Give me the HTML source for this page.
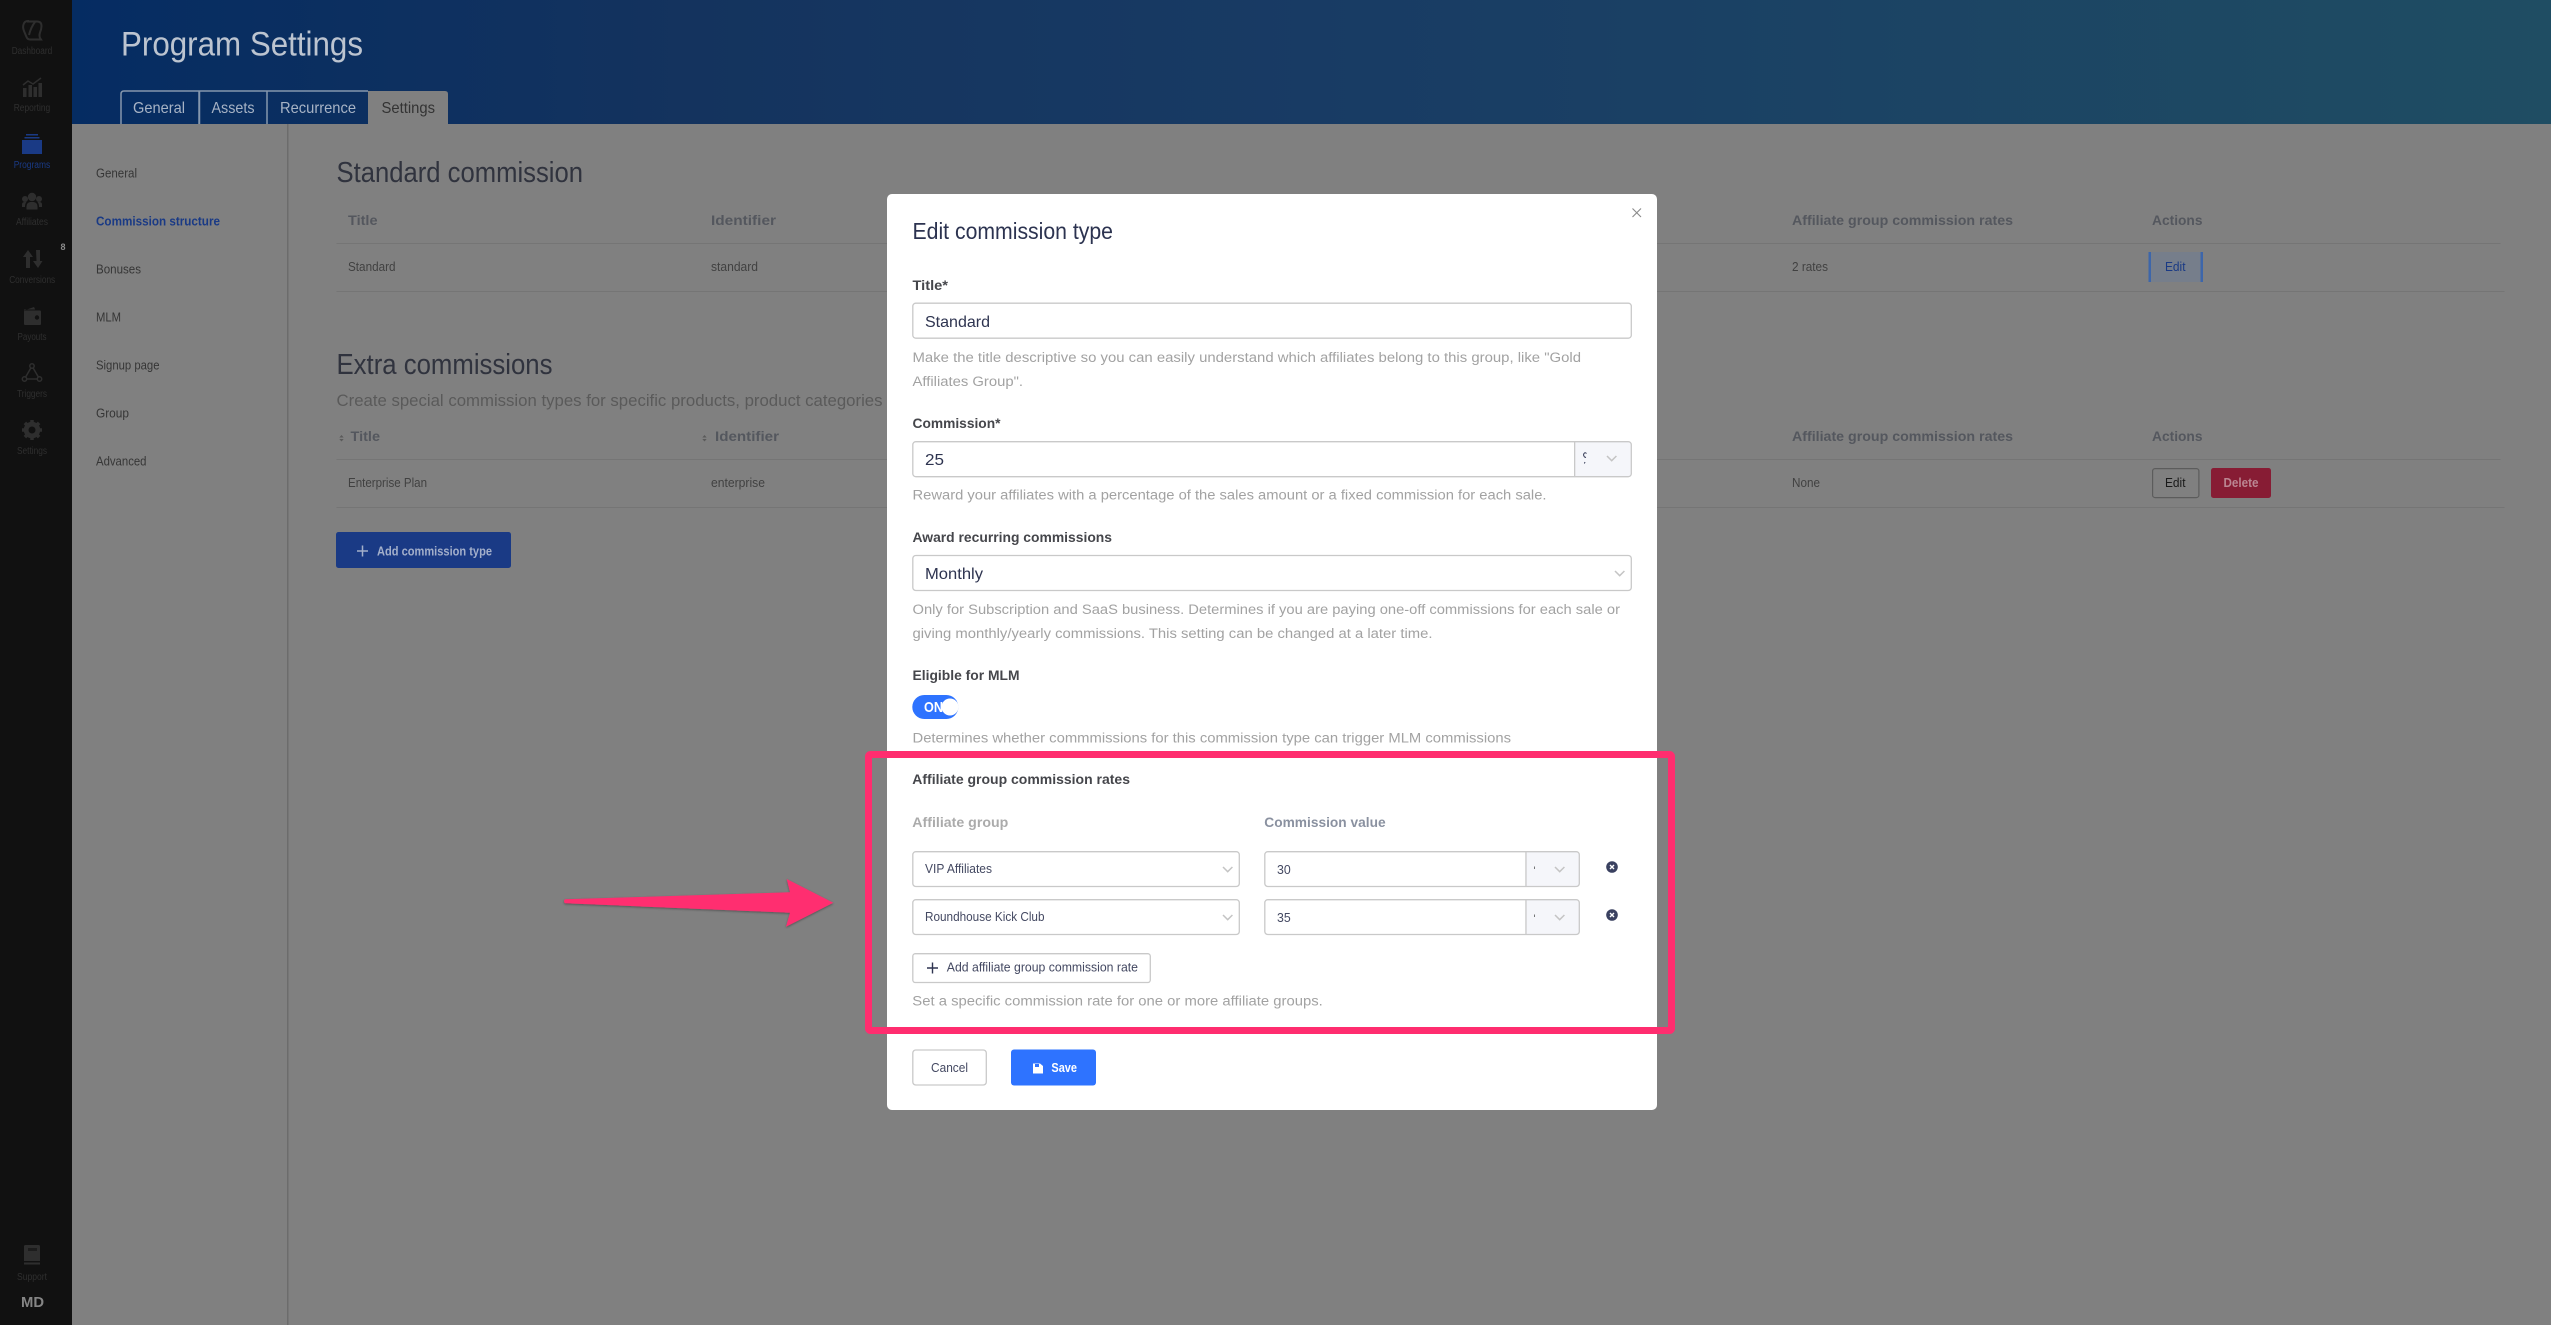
<!DOCTYPE html>
<html lang="en">
<head>
<meta charset="utf-8">
<title>Program Settings</title>
<style>
html,body{margin:0;padding:0;background:#808080;width:2551px;height:1325px;overflow:hidden}
svg{display:block}
text{font-family:"Liberation Sans",sans-serif;white-space:pre}
.nav{font-size:10px;fill:#2f2f2f}
.sub{font-size:13px;fill:#363636}
.h2{font-size:29px;fill:#30333e}
.th{font-size:14px;font-weight:700;fill:#54575e}
.td{font-size:12.5px;fill:#414141}
.tab{font-size:16px;fill:#a7b3c5}
.lbl{font-size:13.5px;font-weight:700;fill:#45464b}
.val{font-size:16px;fill:#2e3450}
.val2{font-size:12.5px;fill:#444962}
.help{font-size:13.5px;fill:#a2a2a2}
.chev{fill:none;stroke:#c4c4c4;stroke-width:1.5}
.box{fill:#fff;stroke:#c9c9c9;stroke-width:1.3}
.ico{fill:#2e2e2e}
</style>
</head>
<body>
<svg width="2551" height="1325" viewBox="0 0 2551 1325" xmlns="http://www.w3.org/2000/svg">
<defs>
<linearGradient id="hd" x1="72" y1="0" x2="2551" y2="0" gradientUnits="userSpaceOnUse">
<stop offset="0" stop-color="#052c62"/>
<stop offset=".25" stop-color="#14335e"/>
<stop offset=".5" stop-color="#183b64"/>
<stop offset="1" stop-color="#1f4d63"/>
</linearGradient>
<filter id="sh" x="-5%" y="-30%" width="110%" height="170%"><feDropShadow dx="0" dy="1" stdDeviation="1" flood-color="#000" flood-opacity=".35"/></filter>
</defs>

<!-- page -->
<rect width="2551" height="1325" fill="#808080"/>
<rect x="72" width="2479" height="124" fill="url(#hd)"/>

<!-- sidebar -->
<rect width="72" height="1325" fill="#111"/>
<path d="M28 21.500h9q4.500 0 4.500 4.500q0 3-1.500 6.500q-1 3 0 5.500l1 1.500H30q-2.500 0-3.500-2.500l-2.500-6q-1.500-4-.5-6.500q1-3.500 4.500-3.500zM35 22q-4 5-6 13" fill="none" stroke="#2e2e2e" stroke-width="2"/>
<text class="nav" x="11.700" y="54" textLength="40.500" lengthAdjust="spacingAndGlyphs">Dashboard</text>
<path class="ico" d="M23 88h3.500v9H23zM28.500 85h3.500v12h-3.500zM33.500 87H37v10h-3.500zM38.500 83H42v14h-3.500z"/>
<path d="M23 85l5-4 5 3 8-6" fill="none" stroke="#2e2e2e" stroke-width="1.500"/>
<text class="nav" x="13.700" y="111" textLength="36.500" lengthAdjust="spacingAndGlyphs">Reporting</text>
<path d="M26 134h12v1.500H26zM24.500 137h15v1.500h-15zM22 140h20v14H22z" fill="#1a3a85"/>
<text class="nav" x="13.700" y="168" textLength="36.500" lengthAdjust="spacingAndGlyphs" style="fill:#1a3a85">Programs</text>
<circle class="ico" cx="32" cy="197" r="4.200"/><circle class="ico" cx="25" cy="199" r="3"/><circle class="ico" cx="39" cy="199" r="3"/>
<path class="ico" d="M22 207v-2.500q0-2.500 3-2.500h1.500q-1.500 1.500-1.500 5zM42 207v-2.500q0-2.500-3-2.500h-1.500q1.500 1.500 1.500 5zM26.500 209.500v-3q0-4 4-4.500h3q4 .5 4 4.500v3z"/>
<text class="nav" x="16" y="225" textLength="32" lengthAdjust="spacingAndGlyphs">Affiliates</text>
<path class="ico" d="M28 250l5 7h-3v11h-4v-11h-3zM36 250h4v11h2.500l-4.500 7-5-7h3.500z"/>
<text class="nav" x="9.200" y="283" textLength="46" lengthAdjust="spacingAndGlyphs">Conversions</text>
<text x="60.500" y="250" style="font-size:9px;font-weight:700;fill:#8a8a8a">8</text>
<path class="ico" d="M24 310.500l10-3.500 1.200 2.500H24zM25 310.500h15q1 0 1 1v12.500q0 1-1 1H25q-1 0-1-1V311.500q0-1 1-1z"/><circle cx="37" cy="317.500" r="2.200" fill="#111"/>
<text class="nav" x="17.500" y="340" textLength="29" lengthAdjust="spacingAndGlyphs">Payouts</text>
<path d="M32 366L24.500 379h15z" fill="none" stroke="#2e2e2e" stroke-width="1.500"/><circle cx="32" cy="366" r="2.200" fill="#111" stroke="#2e2e2e" stroke-width="1.500"/><circle cx="24.500" cy="379" r="2.200" fill="#111" stroke="#2e2e2e" stroke-width="1.500"/><circle cx="39.500" cy="379" r="2.200" fill="#111" stroke="#2e2e2e" stroke-width="1.500"/>
<text class="nav" x="17" y="397" textLength="30" lengthAdjust="spacingAndGlyphs">Triggers</text>
<circle cx="32" cy="430" r="6" fill="none" stroke="#2e2e2e" stroke-width="4.500"/>
<path d="M32 420v20M22 430h20M24.900 422.900l14.200 14.200M39.100 422.900l-14.200 14.200" stroke="#2e2e2e" stroke-width="3.500"/><circle cx="32" cy="430" r="3.500" fill="#111"/>
<text class="nav" x="17" y="454" textLength="30" lengthAdjust="spacingAndGlyphs">Settings</text>
<path class="ico" d="M25.500 1245h13q1.500 0 1.500 1.500V1261H24v-14.500q0-1.500 1.500-1.500zM24 1262.500h16v2H24z"/><rect x="28" y="1248" width="9" height="3" fill="#1c1c1c"/>
<text class="nav" x="17" y="1280" textLength="30" lengthAdjust="spacingAndGlyphs">Support</text>
<text x="21" y="1307" textLength="23" lengthAdjust="spacingAndGlyphs" style="font-size:15px;font-weight:700;fill:#858585">MD</text>

<!-- header -->
<text x="121" y="55.500" textLength="242" lengthAdjust="spacingAndGlyphs" style="font-size:34px;fill:#bcc4d0">Program Settings</text>
<path d="M121 124V94q0-3 3-3h75v33M199.500 124V91h67.500v33M267 124V91h101" fill="none" stroke="#8597ad" stroke-width="1.500"/>
<path d="M368 124V91h77q3 0 3 3v30z" fill="#808080"/>
<text class="tab" x="133" y="113" textLength="52" lengthAdjust="spacingAndGlyphs">General</text>
<text class="tab" x="211.500" y="113" textLength="43" lengthAdjust="spacingAndGlyphs">Assets</text>
<text class="tab" x="280" y="113" textLength="76" lengthAdjust="spacingAndGlyphs">Recurrence</text>
<text class="tab" x="381.500" y="113" textLength="53.500" lengthAdjust="spacingAndGlyphs" style="fill:#333">Settings</text>

<!-- sub nav -->
<rect x="287" y="124" width="1.500" height="1201" fill="#6c6c6c"/>
<text class="sub" x="96" y="177.500" textLength="41" lengthAdjust="spacingAndGlyphs">General</text>
<text class="sub" x="96" y="225.500" textLength="124" lengthAdjust="spacingAndGlyphs" style="fill:#1a3a85;font-weight:700">Commission structure</text>
<text class="sub" x="96" y="273.500" textLength="45" lengthAdjust="spacingAndGlyphs">Bonuses</text>
<text class="sub" x="96" y="321.500" textLength="25" lengthAdjust="spacingAndGlyphs">MLM</text>
<text class="sub" x="96" y="369.500" textLength="63.500" lengthAdjust="spacingAndGlyphs">Signup page</text>
<text class="sub" x="96" y="417.500" textLength="33" lengthAdjust="spacingAndGlyphs">Group</text>
<text class="sub" x="96" y="465.500" textLength="50.500" lengthAdjust="spacingAndGlyphs">Advanced</text>

<!-- standard table -->
<text class="h2" x="336.500" y="182" textLength="246.500" lengthAdjust="spacingAndGlyphs">Standard commission</text>
<text class="th" x="348" y="225" textLength="29.500" lengthAdjust="spacingAndGlyphs">Title</text>
<text class="th" x="711" y="225" textLength="65" lengthAdjust="spacingAndGlyphs">Identifier</text>
<text class="th" x="1792" y="225" textLength="221" lengthAdjust="spacingAndGlyphs">Affiliate group commission rates</text>
<text class="th" x="2152" y="225" textLength="50.500" lengthAdjust="spacingAndGlyphs">Actions</text>
<rect x="336.500" y="243" width="2164" height="1" fill="#757575"/>
<text class="td" x="348" y="271" textLength="47.500" lengthAdjust="spacingAndGlyphs">Standard</text>
<text class="td" x="711" y="271" textLength="47" lengthAdjust="spacingAndGlyphs">standard</text>
<text class="td" x="1792" y="271" textLength="36" lengthAdjust="spacingAndGlyphs">2 rates</text>
<rect x="2149" y="252" width="53.500" height="30" fill="#767e8b"/>
<rect x="2148.500" y="252" width="2.500" height="30" fill="#3d66aa"/><rect x="2200.500" y="252" width="2.500" height="30" fill="#3d66aa"/>
<text x="2165" y="271" textLength="20.500" lengthAdjust="spacingAndGlyphs" style="font-size:12.500px;fill:#1a3a85">Edit</text>
<rect x="336.500" y="291" width="2168" height="1" fill="#757575"/>

<!-- extra table -->
<text class="h2" x="336.500" y="374" textLength="216" lengthAdjust="spacingAndGlyphs">Extra commissions</text>
<text x="336.500" y="406" textLength="546" lengthAdjust="spacingAndGlyphs" style="font-size:16.500px;fill:#5a5a5a">Create special commission types for specific products, product categories</text>
<path d="M341.500 435l2.200 2.500h-4.400zM341.500 441.500l2.200-2.500h-4.400z" fill="#5a5a5a"/>
<text class="th" x="350.500" y="441" textLength="29.500" lengthAdjust="spacingAndGlyphs">Title</text>
<path d="M704.500 435l2.200 2.500h-4.400zM704.500 441.500l2.200-2.500h-4.400z" fill="#5a5a5a"/>
<text class="th" x="715" y="441" textLength="64" lengthAdjust="spacingAndGlyphs">Identifier</text>
<text class="th" x="1792" y="441" textLength="221" lengthAdjust="spacingAndGlyphs">Affiliate group commission rates</text>
<text class="th" x="2152" y="441" textLength="50.500" lengthAdjust="spacingAndGlyphs">Actions</text>
<rect x="336.500" y="459" width="2164" height="1" fill="#757575"/>
<text class="td" x="348" y="487" textLength="79" lengthAdjust="spacingAndGlyphs">Enterprise Plan</text>
<text class="td" x="711" y="487" textLength="54" lengthAdjust="spacingAndGlyphs">enterprise</text>
<text class="td" x="1792" y="487" textLength="28" lengthAdjust="spacingAndGlyphs">None</text>
<rect x="2152.600" y="468.600" width="46.300" height="29" rx="2.500" fill="none" stroke="#5c5c5c" stroke-width="1.200"/>
<text x="2165" y="487" textLength="20.500" lengthAdjust="spacingAndGlyphs" style="font-size:12.500px;fill:#1a1a1a">Edit</text>
<rect x="2211" y="468" width="60" height="30" rx="2.500" fill="#871c34"/>
<text x="2223.500" y="487" textLength="35" lengthAdjust="spacingAndGlyphs" style="font-size:12.500px;font-weight:700;fill:#bb8692">Delete</text>
<rect x="336.500" y="507" width="2168" height="1" fill="#757575"/>
<rect x="336" y="532" width="175" height="36" rx="2.500" fill="#1a3a85"/>
<path d="M357 551h11M362.500 545.500v11" stroke="#a3afca" stroke-width="1.500" fill="none"/>
<text x="377" y="555.500" textLength="115" lengthAdjust="spacingAndGlyphs" style="font-size:12.500px;font-weight:700;fill:#a3afca">Add commission type</text>

<!-- modal -->
<rect x="887" y="194" width="770" height="916" rx="5" fill="#fff"/>
<path d="M1632.500 208.500l8.500 8.500M1641 208.500l-8.500 8.500" stroke="#8a8a8a" stroke-width="1.100" fill="none"/>
<text x="912.500" y="239" textLength="200.500" lengthAdjust="spacingAndGlyphs" style="font-size:23px;fill:#2c3350">Edit commission type</text>

<text class="lbl" x="912.500" y="290" textLength="35.500" lengthAdjust="spacingAndGlyphs">Title*</text>
<rect class="box" x="912.800" y="303.200" width="718.500" height="35" rx="3"/>
<text class="val" x="925" y="327" textLength="65" lengthAdjust="spacingAndGlyphs">Standard</text>
<text class="help" x="912.500" y="362" textLength="668.500" lengthAdjust="spacingAndGlyphs">Make the title descriptive so you can easily understand which affiliates belong to this group, like "Gold</text>
<text class="help" x="912.500" y="386" textLength="110.500" lengthAdjust="spacingAndGlyphs">Affiliates Group".</text>

<text class="lbl" x="912.500" y="428" textLength="88" lengthAdjust="spacingAndGlyphs">Commission*</text>
<path d="M1574.500 442h54q3 0 3 3v28.500q0 3-3 3h-54z" fill="#f5f6fa"/>
<rect class="box" x="912.800" y="441.700" width="718.500" height="35" rx="3" style="fill:none"/>
<rect x="1574" y="442" width="1.300" height="34.500" fill="#c9c9c9"/>
<text class="val" x="925" y="465" textLength="19" lengthAdjust="spacingAndGlyphs">25</text>
<path d="M1586.500 453.500q-1.500-1.500-2.500 0t.5 3.500l1.500.5M1585 462l-.6 1.500" fill="none" stroke="#2e3450" stroke-width="1"/>
<path class="chev" d="M1607 456l4.700 4.700 4.700-4.700"/>
<text class="help" x="912.500" y="499.500" textLength="634" lengthAdjust="spacingAndGlyphs">Reward your affiliates with a percentage of the sales amount or a fixed commission for each sale.</text>

<text class="lbl" x="912.500" y="542" textLength="199.500" lengthAdjust="spacingAndGlyphs">Award recurring commissions</text>
<rect class="box" x="912.800" y="555.500" width="718.500" height="35" rx="3"/>
<text class="val" x="925" y="579" textLength="58" lengthAdjust="spacingAndGlyphs">Monthly</text>
<path class="chev" d="M1615 571l4.700 4.700 4.700-4.700"/>
<text class="help" x="912.500" y="614" textLength="707.500" lengthAdjust="spacingAndGlyphs">Only for Subscription and SaaS business. Determines if you are paying one-off commissions for each sale or</text>
<text class="help" x="912.500" y="638" textLength="520" lengthAdjust="spacingAndGlyphs">giving monthly/yearly commissions. This setting can be changed at a later time.</text>

<text class="lbl" x="912.500" y="680" textLength="107" lengthAdjust="spacingAndGlyphs">Eligible for MLM</text>
<rect x="912.300" y="695" width="46" height="24" rx="12" fill="#2e73ff"/>
<text x="924" y="712" textLength="19" lengthAdjust="spacingAndGlyphs" style="font-size:15px;font-weight:700;fill:#fff">ON</text>
<circle cx="950" cy="707" r="8.500" fill="#fff"/>
<text class="help" x="912.500" y="742.500" textLength="598.500" lengthAdjust="spacingAndGlyphs">Determines whether commmissions for this commission type can trigger MLM commissions</text>

<text class="lbl" x="912.300" y="784" textLength="217.700" lengthAdjust="spacingAndGlyphs">Affiliate group commission rates</text>
<text class="lbl" x="912.300" y="827" textLength="96" lengthAdjust="spacingAndGlyphs" style="fill:#ababab">Affiliate group</text>
<text class="lbl" x="1264.300" y="827" textLength="121.300" lengthAdjust="spacingAndGlyphs" style="fill:#8a91a0">Commission value</text>

<!-- row 1 -->
<rect class="box" x="912.800" y="851.700" width="326.500" height="34.800" rx="3"/>
<text class="val2" x="925" y="873" textLength="67" lengthAdjust="spacingAndGlyphs">VIP Affiliates</text>
<path class="chev" d="M1223 867l4.700 4.700 4.700-4.700"/>
<path d="M1526 852h51q2.700 0 2.700 3v28.500q0 3-2.700 3h-51z" fill="#f5f6fa"/>
<rect class="box" x="1264.800" y="851.700" width="314.500" height="34.800" rx="3" style="fill:none"/>
<rect x="1525.300" y="852" width="1.300" height="34.500" fill="#c9c9c9"/>
<text class="val2" x="1277" y="874" textLength="13.700" lengthAdjust="spacingAndGlyphs">30</text>
<rect x="1534" y="866.500" width=".8" height="2.500" fill="#555"/>
<path class="chev" d="M1555 867l4.700 4.700 4.700-4.700"/>
<circle cx="1612" cy="867" r="5.800" fill="#3a4160"/>
<path d="M1610 865l4 4M1614 865l-4 4" stroke="#fff" stroke-width="1.400"/>

<!-- row 2 -->
<rect class="box" x="912.800" y="899.700" width="326.500" height="34.800" rx="3"/>
<text class="val2" x="925" y="921" textLength="119.500" lengthAdjust="spacingAndGlyphs">Roundhouse Kick Club</text>
<path class="chev" d="M1223 915l4.700 4.700 4.700-4.700"/>
<path d="M1526 900h51q2.700 0 2.700 3v28.500q0 3-2.700 3h-51z" fill="#f5f6fa"/>
<rect class="box" x="1264.800" y="899.700" width="314.500" height="34.800" rx="3" style="fill:none"/>
<rect x="1525.300" y="900" width="1.300" height="34.500" fill="#c9c9c9"/>
<text class="val2" x="1277" y="922" textLength="13.700" lengthAdjust="spacingAndGlyphs">35</text>
<rect x="1534" y="914.500" width=".8" height="2.500" fill="#555"/>
<path class="chev" d="M1555 915l4.700 4.700 4.700-4.700"/>
<circle cx="1612" cy="915" r="5.800" fill="#3a4160"/>
<path d="M1610 913l4 4M1614 913l-4 4" stroke="#fff" stroke-width="1.400"/>

<!-- add rate -->
<rect class="box" x="912.800" y="953.700" width="237.500" height="28.800" rx="2.500"/>
<path d="M927 968h11M932.500 962.500v11" stroke="#2e3450" stroke-width="1.400" fill="none"/>
<text class="val2" x="946.800" y="971.700" textLength="191.200" lengthAdjust="spacingAndGlyphs">Add affiliate group commission rate</text>
<text class="help" x="912.300" y="1005.700" textLength="410.500" lengthAdjust="spacingAndGlyphs">Set a specific commission rate for one or more affiliate groups.</text>

<!-- footer -->
<rect class="box" x="912.800" y="1050" width="73.500" height="35" rx="3"/>
<text class="val2" x="931" y="1072" textLength="37" lengthAdjust="spacingAndGlyphs">Cancel</text>
<rect x="1011" y="1049.500" width="85" height="36" rx="3" fill="#2e73ff"/>
<path d="M1033 1063.500h7l3 2.500v7.500h-10z" fill="#fff"/><rect x="1035" y="1064" width="4" height="3" fill="#2e73ff"/>
<text x="1051.400" y="1072" textLength="25.600" lengthAdjust="spacingAndGlyphs" style="font-size:12.500px;font-weight:700;fill:#fff">Save</text>

<!-- annotation -->
<rect x="868.500" y="754.500" width="803" height="276" rx="2" fill="none" stroke="#ff2d6f" stroke-width="7"/>
<path filter="url(#sh)" d="M565 899.300L790 892.300L786.700 879L833.300 902.700L786 926.700L790 912.700L565 903.300Q563 901.300 565 899.300Z" fill="#ff2d6f"/>
</svg>
</body>
</html>
